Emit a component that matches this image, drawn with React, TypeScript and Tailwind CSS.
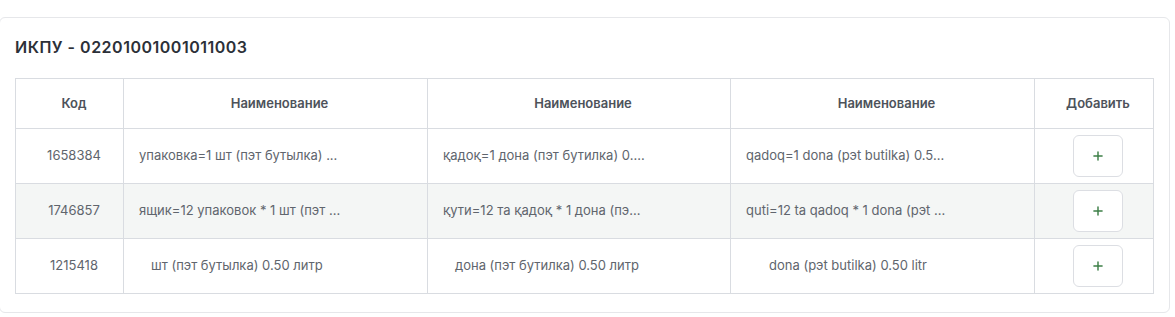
import { Plus } from 'lucide-react';

const rows = [
  {
    code: '1658384',
    ru: 'упаковка=1 шт (пэт бутылка) ...',
    uz: 'қадоқ=1 дона (пэт бутилка) 0....',
    lat: 'qadoq=1 dona (pэt butilka) 0.5...',
    pad: ['pl-[15px]', 'pl-[15px]', 'pl-[15px]'],
  },
  {
    code: '1746857',
    ru: 'ящик=12 упаковок * 1 шт (пэт ...',
    uz: 'қути=12 та қадоқ * 1 дона (пэ...',
    lat: 'quti=12 ta qadoq * 1 dona (pэt ...',
    pad: ['pl-[15px]', 'pl-[15px]', 'pl-[15px]'],
  },
  {
    code: '1215418',
    ru: 'шт (пэт бутылка) 0.50 литр',
    uz: 'дона (пэт бутилка) 0.50 литр',
    lat: 'dona (pэt butilka) 0.50 litr',
    pad: ['pl-[27px]', 'pl-[27px]', 'pl-[38px]'],
  },
];

export default function App() {
  return (
    <div className="min-h-screen bg-white pt-[17px] font-['Inter',sans-serif]">
      <div className="-ml-px w-[1171px] rounded-md border border-[#e6e7ea] bg-white px-[15px] pb-[18px] pt-[17px]">
        <h2 className="mb-[19px] text-[16px] leading-6 font-semibold tracking-[0.5px] text-[#2c3038]">
          ИКПУ - 02201001001011003
        </h2>
        <table className="w-[1138px] table-fixed border-collapse border border-[#d9dce1] text-[13px]">
          <colgroup>
            <col className="w-[108px]" />
            <col className="w-[304px]" />
            <col className="w-[303px]" />
            <col className="w-[304px]" />
            <col className="w-[119px]" />
          </colgroup>
          <thead>
            <tr className="h-[50px] text-[#4d525a]">
              <th className="border border-[#d9dce1] pl-[9px] font-semibold">Код</th>
              <th className="border border-[#d9dce1] pl-[8px] font-semibold">Наименование</th>
              <th className="border border-[#d9dce1] pl-[8px] font-semibold">Наименование</th>
              <th className="border border-[#d9dce1] pl-[8px] font-semibold">Наименование</th>
              <th className="border border-[#d9dce1] pl-[8px] font-semibold">Добавить</th>
            </tr>
          </thead>
          <tbody className="text-[#60656d]">
            {rows.map((r, i) => (
              <tr key={r.code} className={i === 1 ? 'h-[55px] bg-[#f4f6f5]' : 'h-[55px]'}>
                <td className="border border-[#d9dce1] pl-[9px] text-center">{r.code}</td>
                <td className={`border border-[#d9dce1] whitespace-nowrap ${r.pad[0]}`}>{r.ru}</td>
                <td className={`border border-[#d9dce1] whitespace-nowrap ${r.pad[1]}`}>{r.uz}</td>
                <td className={`border border-[#d9dce1] whitespace-nowrap ${r.pad[2]}`}>{r.lat}</td>
                <td className="border border-[#d9dce1] pl-[8px]">
                  <div className="flex justify-center">
                    <button className="flex h-[42px] w-[50px] items-center justify-center rounded-md border border-[#dcdee3] bg-white text-[#3d7f47]">
                      <Plus size={14} strokeWidth={2.5} />
                    </button>
                  </div>
                </td>
              </tr>
            ))}
          </tbody>
        </table>
      </div>
    </div>
  );
}
